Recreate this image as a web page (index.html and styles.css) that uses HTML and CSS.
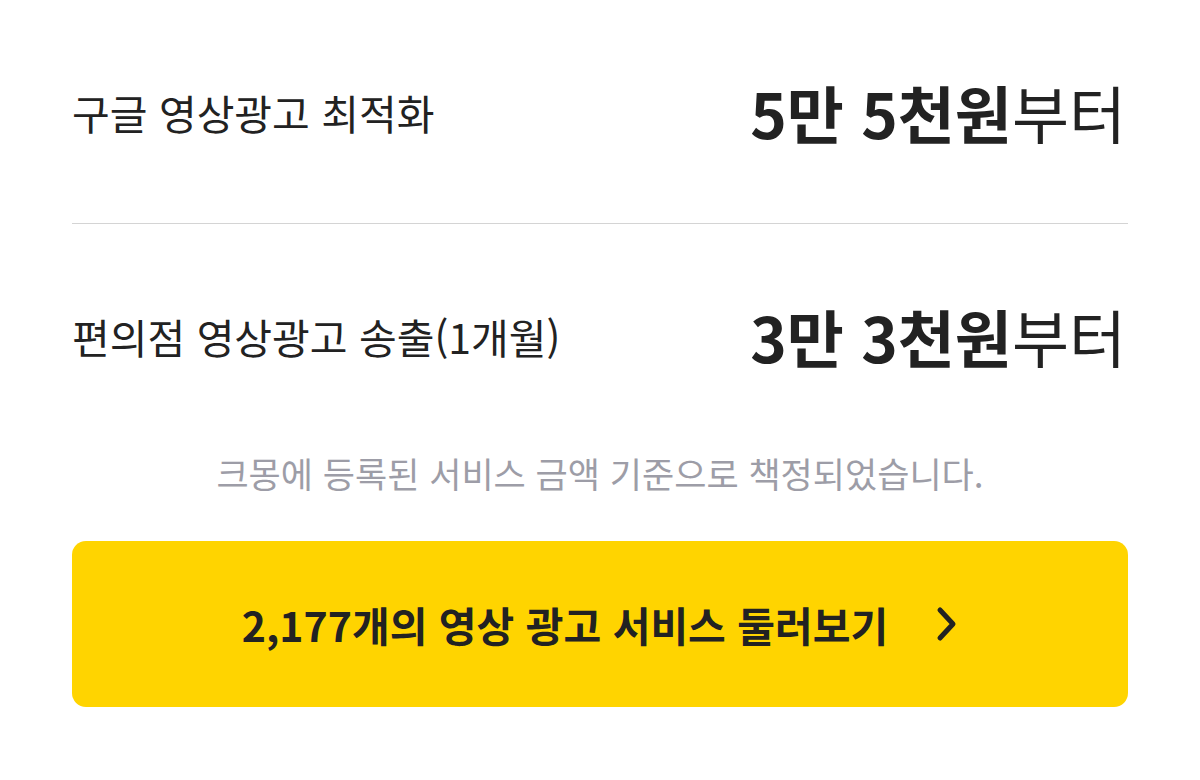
FILE: index.html
```html
<!DOCTYPE html>
<html lang="ko">
<head>
    <meta charset="UTF-8">
    <meta name="viewport" content="width=device-width, initial-scale=1.0">
    <title>영상광고 가격</title>
    <link rel="stylesheet" href="styles.css">
</head>
<body>
    <div class="container">
        <div class="price-row first">
            <span class="label">구글 영상광고 최적화</span>
            <span class="price"><strong>5만 5천원</strong>부터</span>
        </div>
        <div class="price-row">
            <span class="label">편의점 영상광고 송출(1개월)</span>
            <span class="price"><strong>3만 3천원</strong>부터</span>
        </div>

        <p class="note">크몽에 등록된 서비스 금액 기준으로 책정되었습니다.</p>

        <a class="browse-btn" href="#">
            <span>2,177개의 영상 광고 서비스 둘러보기</span>
            <svg class="chevron" width="22" height="36" viewBox="0 0 22 36">
                <path d="M4 4 L17 18 L4 32" fill="none" stroke="#222" stroke-width="5" stroke-linecap="round" stroke-linejoin="round"/>
            </svg>
        </a>
    </div>
</body>
</html>
```

FILE: styles.css
```css
body {
    margin: 0;
    font-family: "Noto Sans CJK KR", "Noto Sans", sans-serif;
    color: #222;
    background-color: #fff;
}
.container {
    padding: 0 72px;
}
.price-row {
    display: flex;
    justify-content: space-between;
    align-items: center;
    height: 223px;
}
.price-row.first {
    border-bottom: 1px solid #d4d4d4;
}
.label {
    font-size: 41px;
}
.price {
    font-size: 62px;
    margin-right: 2px;
}
.price strong {
    font-weight: 700;
}
.note {
    margin: 0 0 43px;
    text-align: center;
    font-size: 35px;
    line-height: 51px;
    color: #9d9da7;
}
.browse-btn {
    display: flex;
    align-items: center;
    justify-content: center;
    gap: 48px;
    height: 166px;
    border-radius: 14px;
    background-color: #ffd400;
    color: #222;
    text-decoration: none;
    font-size: 41px;
    font-weight: 700;
}
```
